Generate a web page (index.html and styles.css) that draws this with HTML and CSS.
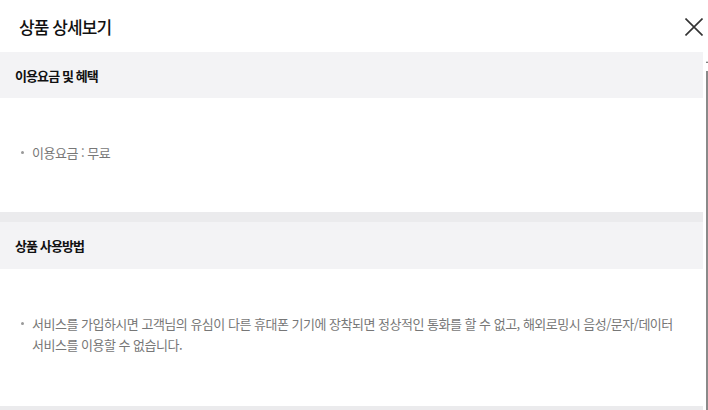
FILE: index.html
```html
<!DOCTYPE html>
<html lang="ko">
<head>
  <meta charset="UTF-8" />
  <meta name="viewport" content="width=device-width, initial-scale=1.0" />
  <title>상품 상세보기</title>
  <link rel="stylesheet" href="styles.css">
</head>
<body>
  <div class="modal">
    <div class="modal-head">
      <h1>상품 상세보기</h1>
      <button class="close" title="닫기">
        <svg width="18" height="18" viewBox="0 0 18 18">
          <path d="M0.5 0.5 L17.5 17.5 M17.5 0.5 L0.5 17.5" stroke="#333" stroke-width="1.6" fill="none" />
        </svg>
      </button>
    </div>

    <div class="modal-body">
      <div class="sections">
        <section class="info">
          <h2 class="info-title">이용요금 및 혜택</h2>
          <ul class="info-list">
            <li>이용요금 : 무료</li>
          </ul>
        </section>

        <section class="info">
          <h2 class="info-title">상품 사용방법</h2>
          <ul class="info-list">
            <li>서비스를 가입하시면 고객님의 유심이 다른 휴대폰 기기에 장착되면 정상적인 통화를 할 수 없고, 해외로밍시 음성/문자/데이터 서비스를 이용할 수 없습니다.</li>
          </ul>
        </section>

        <div class="info-divider"></div>
      </div>

      <div class="scroll">
        <span class="scroll-arrow"></span>
        <span class="scroll-thumb"></span>
      </div>
    </div>
  </div>
</body>
</html>
```

FILE: styles.css
```css
body {
  margin: 0;
  background: #fff;
  font-family: "Noto Sans CJK KR", "Noto Sans", sans-serif;
  color: #111;
}

.modal {
  width: 708px;
  height: 410px;
  overflow: hidden;
}

.modal-head {
  height: 52px;
  display: flex;
  align-items: center;
  justify-content: space-between;
  padding: 0 5px 0 19px;
}

.modal-head h1 {
  margin: 0;
  font-size: 17px;
  font-weight: 500;
  letter-spacing: -0.9px;
  color: #111;
}

.close {
  border: none;
  background: none;
  padding: 0;
  width: 18px;
  height: 18px;
  margin-top: 1px;
  cursor: pointer;
}

.close svg {
  display: block;
}

.modal-body {
  display: flex;
  height: 358px;
  overflow: hidden;
}

.sections {
  flex: 0 0 703px;
}

.info + .info {
  border-top: 10px solid #ebebed;
}

.info-divider {
  height: 10px;
  background: #ebebed;
}

.info-title {
  margin: 0;
  height: 46px;
  display: flex;
  align-items: center;
  padding: 0 15px;
  background: #f3f3f5;
  font-size: 13px;
  font-weight: 600;
  letter-spacing: -0.9px;
  color: #111;
}

.info + .info .info-title {
  height: 47px;
}

.info-list {
  list-style: none;
  margin: 0;
  padding: 44px 15px 49px 32px;
}

.info + .info .info-list {
  padding-bottom: 51px;
}

.info-list li {
  position: relative;
  font-size: 13px;
  line-height: 21px;
  letter-spacing: -0.5px;
  word-break: keep-all;
  color: #777;
}

.info-list li::before {
  content: "";
  position: absolute;
  left: -11px;
  top: 9px;
  width: 3px;
  height: 3px;
  border-radius: 50%;
  background: #999;
}

.scroll {
  margin-left: 3px;
  width: 2px;
  display: flex;
  flex-direction: column;
}

.scroll-arrow {
  margin-top: 9px;
  width: 0;
  height: 0;
  border-left: 1px solid transparent;
  border-right: 1px solid transparent;
  border-bottom: 2px solid #555;
}

.scroll-thumb {
  margin-top: 8px;
  flex: 1;
  background: #8a8a8a;
}
```
